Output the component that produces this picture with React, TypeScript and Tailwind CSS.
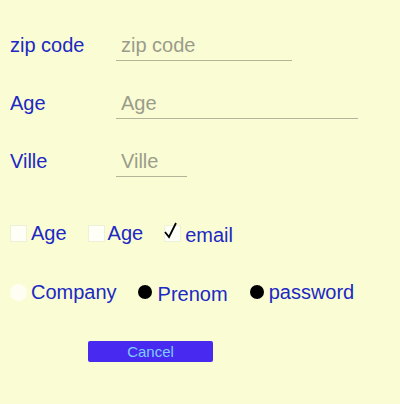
import React from 'react';

const fields = [
    { label: 'zip code', width: 'w-[176px]', row: 'pt-[34px]' },
    { label: 'Age', width: 'w-[242px]', row: 'pt-[31px]' },
    { label: 'Ville', width: 'w-[71px]', row: 'pt-[31px]' },
];

const CheckBox: React.FC<{ checked?: boolean }> = ({ checked }) => (
    <span className="relative w-[17px] h-[17px] bg-white/80 border border-[#eef0d8] shrink-0">
        {checked && (
            <svg className="absolute -left-[2px] -top-[6px] w-[18px] h-[20px]" viewBox="0 0 18 20">
                <path d="M2 12 L6 17 L13 3" fill="none" stroke="#000" strokeWidth="1.8" />
            </svg>
        )}
    </span>
);

const Radio: React.FC<{ filled?: boolean }> = ({ filled }) =>
    filled ? (
        <span className="w-[14px] h-[14px] rounded-full bg-black shrink-0" />
    ) : (
        <span className="w-[17px] h-[17px] rounded-full bg-white/70 shrink-0" />
    );

export default function App() {
    return (
        <div className="w-[400px] h-[404px] bg-[#fafdd3] pl-[10px] font-['Liberation_Sans',Arial,sans-serif] text-[#2028c4]">
            {/* text fields */}
            {fields.map(f => (
                <div key={f.label} className={`flex items-start ${f.row}`}>
                    <label className="w-[106px] text-[20px] leading-[22px]">{f.label}</label>
                    <input
                        placeholder={f.label}
                        className={`${f.width} h-[27px] border-b border-[#b3b59a] bg-transparent pl-[5px] pb-[4px] text-[20px] leading-[22px] outline-none placeholder:text-[#9a9c8c]`}
                    />
                </div>
            ))}

            {/* checkboxes */}
            <div className="flex items-center mt-[46px] h-[20px] text-[20px]">
                <CheckBox />
                <span className="ml-[4px] mr-[21px]">Age</span>
                <CheckBox />
                <span className="ml-[3px] mr-[21px]">Age</span>
                <CheckBox checked />
                <span className="ml-[4px] mt-[4px]">email</span>
            </div>

            {/* radios */}
            <div className="flex items-center mt-[38px] h-[22px] text-[20px]">
                <Radio />
                <span className="ml-[4px] mr-[21px]">Company</span>
                <Radio filled />
                <span className="ml-[6px] mr-[22px] mt-[3px]">Prenom</span>
                <Radio filled />
                <span className="ml-[5px]">password</span>
            </div>

            <button className="ml-[78px] mt-[38px] w-[125px] h-[21px] rounded-[2px] bg-[#4729f0] text-[#7fcbff] text-[15px] leading-[21px]">
                Cancel
            </button>
        </div>
    );
}
